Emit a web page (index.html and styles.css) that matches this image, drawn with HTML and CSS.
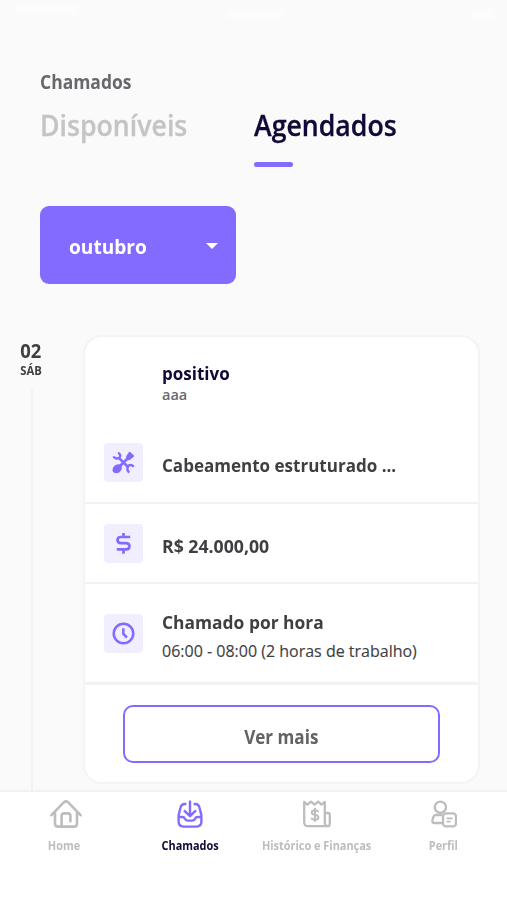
FILE: index.html
```html
<!DOCTYPE html>
<html lang="pt-BR">
<head>
<meta charset="utf-8">
<title>Chamados</title>
<link rel="stylesheet" href="styles.css">
</head>
<body>
<main class="screen">
  <div class="status"><i class="carrier"></i><i class="clock"></i><i class="battery"></i></div>
  <header class="header">
    <h1 class="title"><span>Chamados</span></h1>
    <div class="tabs">
      <div class="tab"><span>Disponíveis</span></div>
      <div class="tab active"><span>Agendados</span></div>
    </div>
  </header>
  <div class="month"><span>outubro</span><i class="caret"></i></div>
  <section class="agenda">
    <aside class="date">
      <b class="day">02</b>
      <span class="weekday">SÁB</span>
      <i class="rail"></i>
    </aside>
    <article class="card">
      <div class="client"><strong>positivo</strong><span>aaa</span></div>
      <div class="row service">
        <div class="tile">
          <svg viewBox="0 0 24 24" fill="none" stroke="currentColor" stroke-width="2.8">
            <path d="M6 18 18 6M7.200 7.200 17 17"/>
            <path stroke-width="2.500" d="M6.400 1.800c2.800 1.600 3 4.300.8 5.400-2.100 1.100-4.600.7-5.600-1.600M22.600 16.600c-1.400-2.400-4.600-2.600-5.800-.4-1.200 2.200-.6 4.800 1.200 6.200"/>
            <path d="m15.600 5.600 2.800-4 4 3.600-4 3.400-2.800.2z" fill="currentColor" stroke-width="1.600" stroke-linejoin="round"/>
            <ellipse cx="5.400" cy="18.600" rx="5.300" ry="4.200" transform="rotate(-40 5.400 18.600)" fill="currentColor" stroke="none"/>
          </svg>
        </div>
        <strong>Cabeamento estruturado ...</strong>
      </div>
      <div class="row price">
        <div class="tile">
          <svg viewBox="0 0 24 24" fill="none" stroke="currentColor" stroke-width="2.800">
            <path d="M19 5.200H9.200Q5.800 5.200 5.800 8.400T9.200 11.600h5.400q3.600 0 3.600 3.300t-3.600 3.300H5M12 1v4.200M12 18v4.600"/>
          </svg>
        </div>
        <strong>R$ 24.000,00</strong>
      </div>
      <div class="row hours">
        <div class="tile">
          <svg viewBox="0 0 24 24" fill="none" stroke="currentColor" stroke-width="2.600">
            <circle cx="12" cy="12" r="10.200"/><path d="M11.800 6.400v5.800l3.800 4"/>
          </svg>
        </div>
        <div class="lines"><strong>Chamado por hora</strong><span>06:00 - 08:00 (2 horas de trabalho)</span></div>
      </div>
      <div class="more"><div class="button"><span>Ver mais</span></div></div>
    </article>
  </section>
</main>
<nav class="nav">
  <div class="item home">
    <svg viewBox="0 0 32 28" fill="none" stroke="currentColor" stroke-width="2.600" stroke-linejoin="round" stroke-linecap="round">
      <path d="M1.400 15.200 14 2.200q2-1.800 4 0l12.600 13M5 12.800v10.600q0 3.200 3.200 3.200h15.600q3.200 0 3.200-3.200V12.800M11.600 26V16q0-2.600 2.600-2.600h3.600q2.600 0 2.600 2.600v5.200"/>
    </svg>
    <span>Home</span>
  </div>
  <div class="item calls">
    <svg viewBox="0 0 26 28" fill="none" stroke="currentColor" stroke-width="2.400" stroke-linejoin="round">
      <path d="M9.400 4H8Q4.200 4 3.400 8L1.600 15.400v6.200q0 5 5 5h12.800q5 0 5-5v-6.200L22.600 8Q21.800 4 18 4h-1.400M13 .6v15M7 10.400l6 5.800 6-5.800M1.600 17h3.800q1.600 0 2.600 1.800 1 1.800 3 1.800h4q2 0 3-1.800 1-1.800 2.600-1.800h3.800"/>
    </svg>
    <span>Chamados</span>
  </div>
  <div class="item history">
    <svg viewBox="0 0 28 28" fill="none" stroke="currentColor" stroke-width="2.300" stroke-linejoin="round">
      <path d="M25 26.200H5.200q-4 0-4-4V2l3.200 2.600L8 1.600l3.600 3 3.600-3 3.200 3L21.800 2v20q0 4.200 3.200 4.200 1.800 0 1.800-3V15q0-2-2-2h-3"/>
      <path stroke-width="2" d="M15.200 12q-.6-1.700-3.400-1.700-3 0-3 2.200 0 1.800 3 2.300 3.600.5 3.600 2.700 0 2.300-3.400 2.300-3 0-3.600-2M12 8v13.800"/>
    </svg>
    <span>Histórico e Finanças</span>
  </div>
  <div class="item profile">
    <svg viewBox="0 0 26 28" fill="none" stroke="currentColor" stroke-width="2.300" stroke-linejoin="round">
      <circle cx="9.400" cy="7.200" r="5.600"/>
      <path d="M11.400 23H3.200q-2 0-1.800-2.200.8-5.600 3.400-5.800h6.400"/>
      <rect x="12" y="13.400" width="13" height="13" rx="3"/>
      <path stroke-width="1.700" d="M15.600 18.400h6M15.600 21.600h4"/>
    </svg>
    <span>Perfil</span>
  </div>
</nav>
</body>
</html>
```

FILE: styles.css
```css
* { box-sizing: border-box; }
body {
  margin: 0;
  width: 507px;
  height: 900px;
  overflow: hidden;
  display: flex;
  flex-direction: column;
  background: #fafafa;
  color: #3f3f43;
  font-family: "Open Sans", "Noto Sans", sans-serif;
  font-weight: 600;
}
svg { display: block; }
.screen { height: 790px; overflow: hidden; }
.status { display: flex; height: 24px; padding: 6px 11px 0 16px; }
.status i { height: 9px; border-radius: 5px; background: #fff; filter: blur(2px); opacity: .55; }
.carrier { width: 64px; }
.clock { width: 58px; margin: 3px 0 0 146px; }
.battery { width: 24px; margin: 3px 0 0 auto; }
.header { height: 182px; padding: 44px 40px 0; }
.title { margin: 0; font-size: 19px; line-height: 28px; font-weight: 700; color: #68686c; }
.title span, .tab span, .month span, strong {
  display: inline-block;
  transform: scaleX(.92);
  transform-origin: left;
}
.tabs { display: flex; margin-top: 8px; font-size: 29px; line-height: 42px; }
.tab { width: 214px; color: #c4c4c4; white-space: nowrap; -webkit-text-stroke: .3px currentColor; }
.tab.active { color: #120838; }
.tab.active::after {
  content: "";
  display: block;
  width: 39px;
  height: 5px;
  margin-top: 16px;
  border-radius: 3px;
  background: #836bff;
}
.month {
  display: flex;
  align-items: center;
  justify-content: space-between;
  width: 196px;
  height: 78px;
  margin-left: 40px;
  padding: 3px 18px 0 29px;
  border-radius: 9px;
  background: #836bff;
  color: #fff;
  font-size: 20px;
  font-weight: 700;
}
.month span { transform: scaleX(.955); }
.caret {
  margin-top: -2px;
  border: 6.500px solid transparent;
  border-top-color: #fff;
  border-bottom: 0;
}
.agenda { display: flex; height: 506px; padding-top: 51px; }
.date { width: 62px; margin-right: 21px; display: flex; flex-direction: column; align-items: center; }
.day { margin-top: 4px; font-size: 19px; font-weight: 700; line-height: 24px; transform: scaleX(.97); }
.weekday { font-size: 11.500px; font-weight: 700; line-height: 16px; transform: scaleX(.98); }
.rail { width: 2px; flex: 1; margin: 10px 0 0 1px; background: #f2f2f3; }
.card {
  width: 397px;
  height: 449px;
  border: 2px solid #f4f4f5;
  border-radius: 19px;
  background: #fff;
  overflow: hidden;
}
strong { font-size: 18.500px; font-weight: 700; white-space: nowrap; }
.client { height: 86px; padding: 22px 0 0 77px; display: flex; flex-direction: column; }
.client strong { line-height: 28px; color: #120838; }
.client span { font-size: 14.500px; line-height: 16px; color: #68686c; }
.row { display: flex; align-items: center; padding-left: 19px; gap: 19px; border-bottom: 2px solid #f2f2f3; }
.row > strong { padding-top: 5px; }
.service { height: 81px; }
.service strong { padding-top: 4px; }
.price { height: 80px; }
.price strong { transform: scaleX(.955); }
.hours { height: 101px; border-bottom-width: 3px; }
.tile {
  width: 39px;
  height: 39px;
  display: grid;
  place-items: center;
  border-radius: 4px;
  background: #f1eeff;
  color: #836bff;
}
.tile svg { width: 23px; height: 23px; }
.lines { display: flex; flex-direction: column; padding-top: 6px; white-space: nowrap; }
.lines strong { line-height: 29px; transform: scaleX(.94); }
.lines span { font-size: 16px; font-weight: 400; line-height: 30px; -webkit-text-stroke: .15px currentColor; }
.more { padding: 20px 38px 0; }
.button {
  height: 58px;
  display: grid;
  place-items: center;
  padding-top: 6px;
  border: 2px solid #836bff;
  border-radius: 10px;
  color: #626266;
  font-size: 19px;
  font-weight: 700;
}
.button span { transform: scaleX(.9); }
.nav {
  display: flex;
  height: 110px;
  border-top: 2px solid #f1f1f2;
  background: #fff;
  color: #bdbdc0;
  font-size: 11.500px;
  font-weight: 700;
}
.item { width: 127px; padding-top: 8px; display: flex; flex-direction: column; align-items: center; white-space: nowrap; }
.item svg { height: 28px; margin-bottom: 10px; }
.item span { line-height: 16px; transform: scaleX(.95); }
.home svg { margin-left: 5px; }
.home span { margin-left: 2px; }
.calls { color: #836bff; }
.calls span { color: #120838; }
.profile span { margin-right: 1px; }
```
